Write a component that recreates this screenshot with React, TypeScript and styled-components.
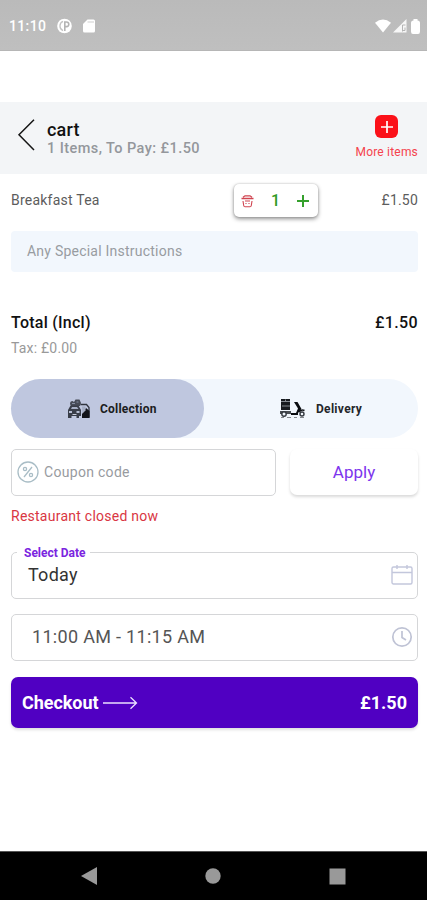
import React from 'react';
import styled, { createGlobalStyle } from 'styled-components';

const Global = createGlobalStyle`
  * { box-sizing: border-box; }
  body { margin: 0; background: #fff; font-family: Roboto, sans-serif; }
  svg { display: block; flex: none; }
  button { font: inherit; border: 0; padding: 0; background: none; }
`;

const Screen = styled.div`
  width: 427px;
  height: 900px;
  display: flex;
  flex-direction: column;
  background: #fff;
  overflow: hidden;
`;

const Label = styled.span<{ $size: number; $color: string; $weight?: number; $track?: number }>`
  font-size: ${p => p.$size}px;
  line-height: 20px;
  color: ${p => p.$color};
  font-weight: ${p => p.$weight ?? 400};
  letter-spacing: ${p => p.$track ?? 0}px;
  white-space: nowrap;
`;

const StatusBar = styled.div`
  height: 51px;
  flex: none;
  display: flex;
  align-items: center;
  justify-content: space-between;
  padding: 2px 7px 0 9px;
  background: linear-gradient(#bababa, #bfbfbf);
  border-bottom: 1px solid #b6b6b6;
`;

const StatusGroup = styled.div<{ $gap: number }>`
  display: flex;
  align-items: center;
  gap: ${p => p.$gap}px;
`;

const Header = styled.header`
  margin-top: 51px;
  height: 72px;
  flex: none;
  display: flex;
  align-items: flex-start;
  padding: 17px 9px 0 17px;
  background: #f3f5f7;
`;

const Titles = styled.div`
  display: flex;
  flex-direction: column;
  margin: 1px 0 0 11px;
  flex: 1;
  & > span + span { margin-top: -1px; }
`;

const MoreItems = styled.button`
  display: flex;
  flex-direction: column;
  align-items: center;
  margin-top: -4px;
  gap: 4px;
`;

const PlusTile = styled.span`
  width: 23px;
  height: 23px;
  display: grid;
  place-items: center;
  border-radius: 6px;
  background: #fb1119;
`;

const Main = styled.main`
  flex: 1;
  display: flex;
  flex-direction: column;
  padding: 0 9px 0 11px;
`;

const ItemRow = styled.div`
  margin-top: 10px;
  height: 33px;
  display: grid;
  grid-template-columns: 223px 84px 1fr;
  align-items: center;
  & > span { margin-top: -1px; }
  & > :last-child { justify-self: end; }
`;

const Stepper = styled.div`
  height: 33px;
  display: flex;
  align-items: center;
  justify-content: space-between;
  padding: 0 9px 0 7px;
  border-radius: 5px;
  background: #fff;
  box-shadow: 0 2px 4px rgba(0, 0, 0, 0.42), 0 0 2px rgba(0, 0, 0, 0.22);
`;

const Instructions = styled.div`
  margin-top: 14px;
  height: 41px;
  display: flex;
  align-items: center;
  padding: 0 0 1px 16px;
  border-radius: 4px;
  background: #f2f7fd;
`;

const TotalRow = styled.div`
  margin-top: 41px;
  height: 20px;
  display: flex;
  justify-content: space-between;
`;

const TaxRow = styled.div`
  margin-top: 5px;
  height: 20px;
  display: flex;
`;

const Toggle = styled.div`
  margin-top: 21px;
  height: 59px;
  display: flex;
  border-radius: 30px;
  background: #f2f7fd;
`;

const ToggleOption = styled.button<{ $active?: boolean }>`
  width: ${p => (p.$active ? 193 : 214)}px;
  height: 59px;
  display: flex;
  align-items: center;
  padding-left: ${p => (p.$active ? 56 : 76)}px;
  gap: ${p => (p.$active ? 10 : 11)}px;
  border-radius: 30px;
  background: ${p => (p.$active ? '#bfc7df' : 'transparent')};
`;

const CouponRow = styled.div`
  margin-top: 11px;
  height: 47px;
  display: grid;
  grid-template-columns: 265px 128px;
  justify-content: space-between;
`;

const Field = styled.div<{ $pad: number; $gap?: number; $top?: number }>`
  margin-top: ${p => p.$top ?? 0}px;
  height: 47px;
  position: relative;
  display: flex;
  align-items: center;
  gap: ${p => p.$gap ?? 0}px;
  padding: 0 4px 2px ${p => p.$pad}px;
  border: 1.5px solid #d5d6d8;
  border-radius: 5px;
  background: #fff;
  & > svg:last-child { margin-left: auto; }
`;

const FloatingLabel = styled.span`
  position: absolute;
  left: 5px;
  top: -9px;
  height: 18px;
  padding: 0 4px 0 7px;
  display: flex;
  align-items: center;
  background: #fff;
`;

const ApplyButton = styled.button`
  height: 46px;
  border-radius: 7px;
  background: #fff;
  box-shadow: 0 2px 3px rgba(0, 0, 0, 0.15);
`;

const ErrorRow = styled.div`
  margin-top: 10px;
  height: 20px;
  display: flex;
`;

const Checkout = styled.button`
  margin-top: 16px;
  height: 51px;
  display: flex;
  align-items: center;
  padding: 0 11px;
  border-radius: 7px;
  background: #5000c2;
  box-shadow: 0 2px 3px rgba(0, 0, 0, 0.13);
  & > svg { margin-left: 4px; }
  & > :last-child { margin-left: auto; }
`;

const Body = styled.div`
  width: 407px;
  display: flex;
  flex-direction: column;
`;

const NavBar = styled.nav`
  height: 49px;
  flex: none;
  display: flex;
  justify-content: space-between;
  align-items: center;
  padding: 0 81px 0 81px;
  background: #000;
  border-top: 1px solid #555;
`;

const NotificationIcon = () => (
  <svg width="15" height="16" viewBox="0 0 15 16">
    <circle cx="7.5" cy="8" r="7.3" fill="#fff" />
    <path d="M6 3.4A5 5 0 0 0 6 12.6" fill="none" stroke="#c4c4c4" strokeWidth="1.3" />
    <path d="M7.800 13V4h1.700a2.300 2.300 0 0 1 0 4.600H8" fill="none" stroke="#b4b4b4" strokeWidth="1.600" />
  </svg>
);

const SdCardIcon = () => (
  <svg width="12" height="14" viewBox="0 0 12 14">
    <path d="M4.5.5H10.500q1.500 0 1.500 1.500V12q0 1.500-1.500 1.500H1.500Q0 13.500 0 12V5z" fill="#fff" />
    <path d="M4.500 3H11" stroke="#cfcfcf" strokeWidth="1" />
  </svg>
);

const WifiIcon = () => (
  <svg width="16" height="14" viewBox="0 0 16 14">
    <path d="M0 3.700Q8-2.700 16 3.700L8 13.500z" fill="#fff" />
  </svg>
);

const SignalIcon = () => (
  <svg width="14" height="14" viewBox="0 0 14 14">
    <path d="M0 13.500 13.500 0v13.500z" fill="#fff" opacity=".88" />
    <path d="M9.500 6v6.500M9.500 6h3M12 8.500v3h-2" fill="none" stroke="#b5b5b5" strokeWidth="1" />
  </svg>
);

const BatteryIcon = () => (
  <svg width="9" height="15" viewBox="0 0 9 15">
    <path d="M2.500 1.500V0h4v1.500Q9 1.500 9 4v8.500Q9 15 7 15H2q-2 0-2-2.500V4Q0 1.500 2.500 1.500z" fill="#fff" />
  </svg>
);

const BackIcon = () => (
  <svg width="19" height="32" viewBox="0 0 19 32">
    <path d="M17 .8 2 15.800 17 31" fill="none" stroke="#151515" strokeWidth="1.500" />
  </svg>
);

const PlusIcon = ({ size, color, stroke }: { size: number; color: string; stroke: number }) => (
  <svg width={size} height={size} viewBox="0 0 12 12">
    <path d="M6 0v12M0 6h12" stroke={color} strokeWidth={stroke} />
  </svg>
);

const TrashIcon = () => (
  <svg width="13" height="14" viewBox="0 0 13 14" fill="none" stroke="#d04450">
    <path d="M.5 4.500h12M2 3.200l2-1.400h5l2 1.400" strokeWidth="1.300" />
    <path d="M2 7l.7 4.500q.2 1.300 1.300 1.300h5q1.100 0 1.300-1.300L11 7M4 7h5M5 9v1M8 9v1" strokeWidth="1.100" />
  </svg>
);

const CollectionIcon = () => (
  <svg width="23" height="20" viewBox="0 0 23 20">
    <path d="M3 5q0-3 2.500-3L7 3l1.500-2.500h4L14 4l-1 3H4z" fill="#464b57" />
    <path d="M5 4.500h3M9.500 3h2" stroke="#8790a5" />
    <path d="M1 11 3.500 6.500h8L14 11v6h-2v2H9.500v-2h-5v2H1z" fill="#383d48" />
    <path d="M4 10 5 8h5l1.500 2z" fill="#a5aec5" />
    <path d="M2 12h3v2H2zM9.500 12h3v2h-3z" fill="#b5bdd2" />
    <path d="M5.500 15.500h4" stroke="#c6cbd8" />
    <path d="M13.500 5.500h6l2.500 3v10" fill="none" stroke="#30343e" strokeWidth="1.300" />
    <path d="m19 9 3.500 3v7H15v-4z" fill="#111319" />
    <path d="M15 7.500h3.500v4l-3 3z" fill="#a5aec4" />
  </svg>
);

const DeliveryIcon = () => (
  <svg width="25" height="21" viewBox="0 0 25 21">
    <path d="M1 1h9v11H1z" fill="#171a1f" />
    <path d="M1 3.500h9M2 8h8M5.500 1.500v2" stroke="#858a91" strokeWidth="1" />
    <path d="M0 13h11v3H0z" fill="#4a4e53" />
    <path d="M14 4h3.500l4 7-3.500 4v2h-7v-2h5l2-4.500z" fill="#0b0d11" />
    <circle cx="4" cy="16" r="2.200" fill="#f2f7fd" stroke="#343940" strokeWidth="1.400" />
    <circle cx="22" cy="16" r="2" fill="#f2f7fd" stroke="#343940" strokeWidth="1.400" />
    <path d="M19 14q2.500-3 5.500-1.500" fill="none" stroke="#14171c" strokeWidth="1.500" />
    <path d="M1 19.500h3M7 19.500h4M14 19.500h3M20 19.500h4" stroke="#85898e" />
  </svg>
);

const CouponIcon = () => (
  <svg width="22" height="22" viewBox="0 0 22 22" fill="none" stroke="#a9bdc6" strokeWidth="1.300">
    <circle cx="11" cy="11" r="10" />
    <path d="M15 6 7 16" />
    <circle cx="8" cy="8" r="1.600" />
    <circle cx="14" cy="14" r="1.600" />
  </svg>
);

const CalendarIcon = () => (
  <svg width="22" height="22" viewBox="0 0 22 22" fill="none" stroke="#c3c7dc" strokeWidth="1.400">
    <rect x="1" y="3" width="20" height="17" rx="1.500" />
    <path d="M1 8.500h20M6 1v4M16 1v4" />
  </svg>
);

const ClockIcon = () => (
  <svg width="22" height="22" viewBox="0 0 22 22" fill="none" stroke="#bfc3d5" strokeWidth="1.700">
    <circle cx="11" cy="11" r="9.200" />
    <path d="M11 5v6.500l4 2.500" />
  </svg>
);

const ArrowIcon = () => (
  <svg width="35" height="14" viewBox="0 0 35 14" fill="none" stroke="#eadfff" strokeWidth="1.300">
    <path d="M0 7h33M27.500 1.300 33.500 7l-6 5.700" />
  </svg>
);

export default function App() {
  return (
    <Screen>
      <Global />
      <StatusBar>
        <StatusGroup $gap={11}>
          <Label $size={14} $color="#fff" $weight={500} $track={0.35}>11:10</Label>
          <NotificationIcon />
          <SdCardIcon />
        </StatusGroup>
        <StatusGroup $gap={2}>
          <WifiIcon />
          <SignalIcon />
          <span />
          <BatteryIcon />
        </StatusGroup>
      </StatusBar>
      <Header>
        <BackIcon />
        <Titles>
          <Label $size={18} $color="#111" $weight={500} $track={0.2}>cart</Label>
          <Label $size={14.5} $color="#94979c" $weight={500} $track={0.43}>1 Items, To Pay: £1.50</Label>
        </Titles>
        <MoreItems>
          <PlusTile><PlusIcon size={12} color="#fff" stroke={1.7} /></PlusTile>
          <Label $size={12} $color="#f5434d" $track={0.2}>More items</Label>
        </MoreItems>
      </Header>
      <Main>
        <Body>
          <ItemRow>
            <Label $size={14} $color="#5c5c5c" $track={0.23}>Breakfast Tea</Label>
            <Stepper>
              <TrashIcon />
              <Label $size={16} $color="#2f9a25" $weight={500}>1</Label>
              <PlusIcon size={12} color="#35a02d" stroke={2} />
            </Stepper>
            <Label $size={14} $color="#5c5c5c" $track={0.2}>£1.50</Label>
          </ItemRow>
          <Instructions>
            <Label $size={14} $color="#989ca1" $track={0.23}>Any Special Instructions</Label>
          </Instructions>
          <TotalRow>
            <Label $size={16} $color="#111" $weight={500} $track={0.25}>Total (Incl)</Label>
            <Label $size={16} $color="#111" $weight={500} $track={0.35}>£1.50</Label>
          </TotalRow>
          <TaxRow><Label $size={14} $color="#999" $track={0.2}>Tax: £0.00</Label></TaxRow>
          <Toggle>
            <ToggleOption $active>
              <CollectionIcon />
              <Label $size={12} $color="#1b1c20" $weight={700} $track={0.22}>Collection</Label>
            </ToggleOption>
            <ToggleOption>
              <DeliveryIcon />
              <Label $size={12} $color="#24262a" $weight={700} $track={0.3}>Delivery</Label>
            </ToggleOption>
          </Toggle>
          <CouponRow>
            <Field $pad={5} $gap={5}>
              <CouponIcon />
              <Label $size={14} $color="#989b9f" $track={0.3}>Coupon code</Label>
            </Field>
            <ApplyButton><Label $size={17} $color="#7c35ed">Apply</Label></ApplyButton>
          </CouponRow>
          <ErrorRow><Label $size={14} $color="#d93643" $track={0.25}>Restaurant closed now</Label></ErrorRow>
          <Field $pad={16} $top={26}>
            <FloatingLabel><Label $size={12} $color="#7b25df" $weight={700}>Select Date</Label></FloatingLabel>
            <Label $size={18} $color="#333" $track={0.25}>Today</Label>
            <CalendarIcon />
          </Field>
          <Field $pad={20} $top={15}>
            <Label $size={18} $color="#555" $track={0.31}>11:00 AM - 11:15 AM</Label>
            <ClockIcon />
          </Field>
          <Checkout>
            <Label $size={18} $color="#fff" $weight={700} $track={-0.05}>Checkout</Label>
            <ArrowIcon />
            <Label $size={18} $color="#fff" $weight={700}>£1.50</Label>
          </Checkout>
        </Body>
      </Main>
      <NavBar>
        <svg width="16" height="18" viewBox="0 0 16 18"><path d="M0 9 16 0v18z" fill="#999" /></svg>
        <svg width="16" height="16" viewBox="0 0 16 16"><circle cx="8" cy="8" r="7.700" fill="#999" /></svg>
        <svg width="17" height="17" viewBox="0 0 17 17"><rect x=".5" y=".5" width="16" height="16" fill="#999" /></svg>
      </NavBar>
    </Screen>
  );
}
